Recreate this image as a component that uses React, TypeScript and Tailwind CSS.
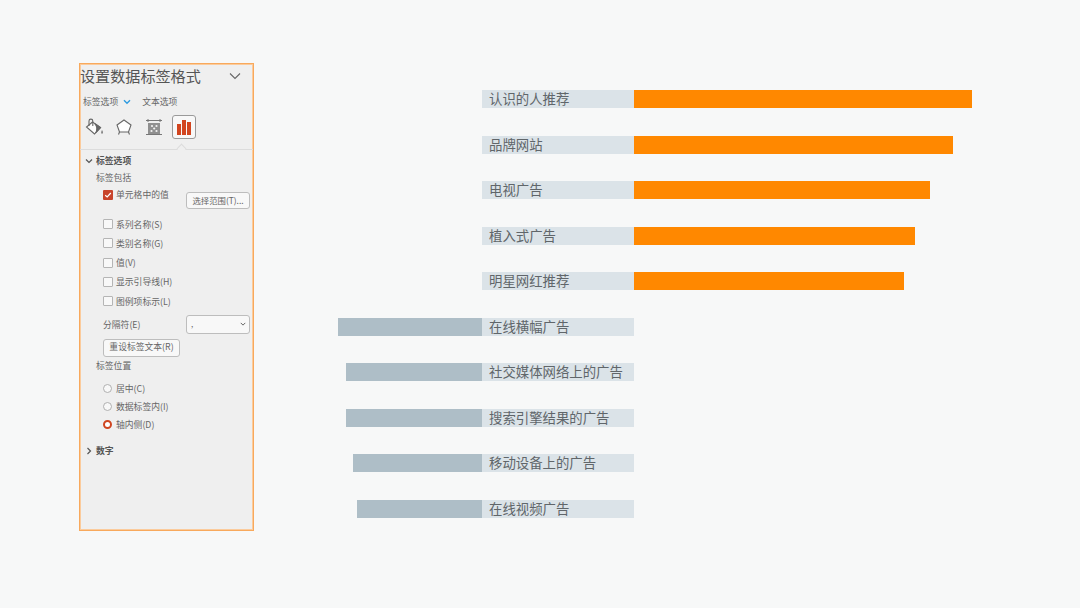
const orange = [
  { label: "认识的人推荐", w: 338 },
  { label: "品牌网站", w: 319 },
  { label: "电视广告", w: 296 },
  { label: "植入式广告", w: 281 },
  { label: "明星网红推荐", w: 270 },
];
const grey = [
  { label: "在线横幅广告", w: 144 },
  { label: "社交媒体网络上的广告", w: 136 },
  { label: "搜索引擎结果的广告", w: 136 },
  { label: "移动设备上的广告", w: 129 },
  { label: "在线视频广告", w: 125 },
];

function Chev({ open = true, className = "" }: { open?: boolean; className?: string }) {
  return (
    <svg width="8" height="8" viewBox="0 0 8 8" className={className} fill="none" stroke="#555" strokeWidth="1.2">
      {open ? <path d="M1 2.5 L4 5.5 L7 2.5" /> : <path d="M2.5 1 L5.5 4 L2.5 7" />}
    </svg>
  );
}

function Check({ label }: { label: string }) {
  return (
    <div className="flex items-center h-[19.25px] pl-[23px] gap-[3px] text-[8.8px] text-[#666]">
      <span className="w-[10px] h-[10px] rounded-[1px] border border-[#b5b5b5] bg-[#f8f8f8]" />
      <span>{label}</span>
    </div>
  );
}

function Radio({ label, checked = false }: { label: string; checked?: boolean }) {
  return (
    <div className="flex items-center h-[18px] pl-[23px] gap-[4px] text-[8.8px] text-[#666]">
      <span
        className={
          checked
            ? "w-[9px] h-[9px] rounded-full border-[2.5px] border-[#cf4520] bg-white"
            : "w-[9px] h-[9px] rounded-full border border-[#b0b0b0] bg-[#f8f8f8]"
        }
      />
      <span>{label}</span>
    </div>
  );
}

function Row({ label, right, w, bar }: { label: string; right: boolean; w: number; bar: string }) {
  return (
    <div className="flex h-[18px]">
      <div className="w-[144px] flex justify-end">
        {!right && <div className="h-full" style={{ width: w, background: bar }} />}
      </div>
      <div className="w-[152px] bg-[#dbe3e8] pl-[7px] flex items-center text-[13.4px] leading-none text-[#60666a] whitespace-nowrap">
        {label}
      </div>
      {right && <div className="h-full" style={{ width: w, background: bar }} />}
    </div>
  );
}

export default function App() {
  return (
    <div
      className="w-[1080px] h-[608px] bg-[#f7f8f8] overflow-hidden flex items-start pl-[79px]"
      style={{ fontFamily: '"Noto Sans CJK SC", "Noto Sans", sans-serif' }}
    >
      <div className="mt-[63px] w-[175px] h-[468px] border border-[#f8a95c] shadow-[inset_0_0_0_1px_#fbcb9c] bg-[#efefef] flex flex-col text-[#666]">
        <div className="h-[23px] flex items-center justify-between pr-[12px]">
          <span className="text-[15.1px] leading-none text-[#555] whitespace-nowrap">设置数据标签格式</span>
          <svg width="12" height="8" viewBox="0 0 12 8" fill="none" stroke="#666" strokeWidth="1.1">
            <path d="M1 1.5 L6 6.5 L11 1.5" />
          </svg>
        </div>
        <div className="h-[16px] mt-[7px] flex items-center pl-[3px] text-[8.8px] whitespace-nowrap">
          <span>标签选项</span>
          <svg width="8" height="6" viewBox="0 0 8 6" fill="none" stroke="#2e9be0" strokeWidth="1.4" className="ml-[5px]">
            <path d="M1 1.2 L4 4.2 L7 1.2" />
          </svg>
          <span className="ml-[11px]">文本选项</span>
        </div>
        <div className="h-[24px] mt-[5px] flex items-center pl-[4px]">
          <svg width="20" height="20" viewBox="0 0 20 20" fill="none" stroke="#666" strokeWidth="1.1">
            <path d="M8.5 5 L16.5 10.5 L10.5 17 L2.5 10 Z" fill="#fdfdfd" />
            <path d="M5 9 V4 A1.9 1.9 0 0 1 8.8 4 V9" />
            <path d="M11 6.8 L16.5 10.5 L11.5 16 Q14.5 11 11 6.8 Z" fill="#666" stroke="#666" />
            <path d="M18 13 C19.2 15 19.3 16.2 18 17 C16.9 16.2 17 15 18 13 Z" fill="#777" stroke="none" />
          </svg>
          <svg width="18" height="18" viewBox="0 0 18 18" fill="none" stroke="#666" strokeWidth="1.1" className="ml-[11px]">
            <path d="M9 2 L16 7 L13.5 14 H4.5 L2 7 Z" fill="#fdfdfd" />
            <path d="M4.5 14 L3.5 16.5 M13.5 14 L14.5 16.5" />
          </svg>
          <svg width="18" height="18" viewBox="0 0 18 18" fill="none" stroke="#777" strokeWidth="1" className="ml-[12px]">
            <path d="M1 2.5 H17 M1 16.5 H17" />
            <path d="M3 1 V4 M15 1 V4" />
            <rect x="3" y="5" width="12" height="11" fill="#909090" stroke="none" />
            <circle cx="7" cy="8" r="1.1" fill="#f2f2f2" stroke="none" />
            <circle cx="11.5" cy="8" r="1.1" fill="#f2f2f2" stroke="none" />
            <circle cx="9.2" cy="10.5" r="1.1" fill="#f2f2f2" stroke="none" />
            <circle cx="6.5" cy="13" r="1.1" fill="#f2f2f2" stroke="none" />
            <circle cx="11.5" cy="13" r="1.1" fill="#f2f2f2" stroke="none" />
          </svg>
          <div className="ml-[9px] w-[24px] h-[24px] rounded-[3px] border border-[#9a9a9a] bg-[#f8f8f8] flex items-end justify-center gap-[1px] pb-[3px]">
            <span className="w-[4px] h-[11px] bg-[#d2451f]" />
            <span className="w-[4px] h-[15px] bg-[#d2451f]" />
            <span className="w-[4px] h-[13px] bg-[#d2451f]" />
          </div>
        </div>
        <div className="relative h-[1px] mt-[10px] bg-[#dcdcdc] shrink-0">
          <span className="absolute left-[98px] top-[-4px] w-[7px] h-[7px] rotate-45 bg-[#efefef] border-l border-t border-[#dcdcdc]" />
        </div>
        <div className="h-[17px] mt-[2px] flex items-center pl-[5px] gap-[3px] text-[8.8px] font-bold text-[#555]">
          <Chev />
          <span>标签选项</span>
        </div>
        <div className="h-[16px] mt-[1px] flex items-center pl-[16px] text-[8.8px]">标签包括</div>
        <div className="h-[28.5px] flex items-start justify-between pr-[3px]">
          <div className="h-[18px] flex items-center pl-[23px] gap-[3px] text-[8.8px]">
            <span className="w-[10px] h-[10px] rounded-[1px] bg-[#c8432a] flex items-center justify-center">
              <svg width="8" height="8" viewBox="0 0 8 8" fill="none" stroke="#fff" strokeWidth="1.2">
                <path d="M1.2 4.2 L3.2 6 L6.8 2" />
              </svg>
            </span>
            <span>单元格中的值</span>
          </div>
          <div className="mt-[6px] w-[64px] h-[17px] rounded-[3px] border border-[#bdbdbd] bg-[#f8f8f8] flex items-center justify-center text-[8.4px] leading-none whitespace-nowrap">
            选择范围(T)...
          </div>
        </div>
        <Check label="系列名称(S)" />
        <Check label="类别名称(G)" />
        <Check label="值(V)" />
        <Check label="显示引导线(H)" />
        <Check label="图例项标示(L)" />
        <div className="h-[19px] mt-[4px] flex items-center justify-between pl-[23px] pr-[3px] text-[8.8px]">
          <span>分隔符(E)</span>
          <div className="w-[64px] h-[19px] rounded-[3px] border border-[#bdbdbd] bg-[#f8f8f8] flex items-center justify-between pl-[4px] pr-[3px]">
            <span className="text-[8px] leading-none">,</span>
            <Chev className="w-[6px] h-[6px]" />
          </div>
        </div>
        <div className="mt-[5px] ml-[23px] w-[77px] h-[18px] rounded-[3px] border border-[#bdbdbd] bg-[#f8f8f8] flex items-center justify-center text-[8.8px] leading-none whitespace-nowrap">
          重设标签文本(R)
        </div>
        <div className="h-[18px] flex items-center pl-[16px] text-[8.8px]">标签位置</div>
        <div className="mt-[5px]">
          <Radio label="居中(C)" />
          <Radio label="数据标签内(I)" />
          <Radio label="轴内侧(D)" checked />
        </div>
        <div className="h-[18px] mt-[8px] flex items-center pl-[5px] gap-[3px] text-[8.8px] font-bold text-[#555]">
          <Chev open={false} />
          <span>数字</span>
        </div>
      </div>

      <div className="ml-[84px] mt-[90px] flex flex-col gap-[27.5px]">
        {orange.map((r) => (
          <Row key={r.label} label={r.label} right w={r.w} bar="#ff8800" />
        ))}
        {grey.map((r) => (
          <Row key={r.label} label={r.label} right={false} w={r.w} bar="#aebec7" />
        ))}
      </div>
    </div>
  );
}
